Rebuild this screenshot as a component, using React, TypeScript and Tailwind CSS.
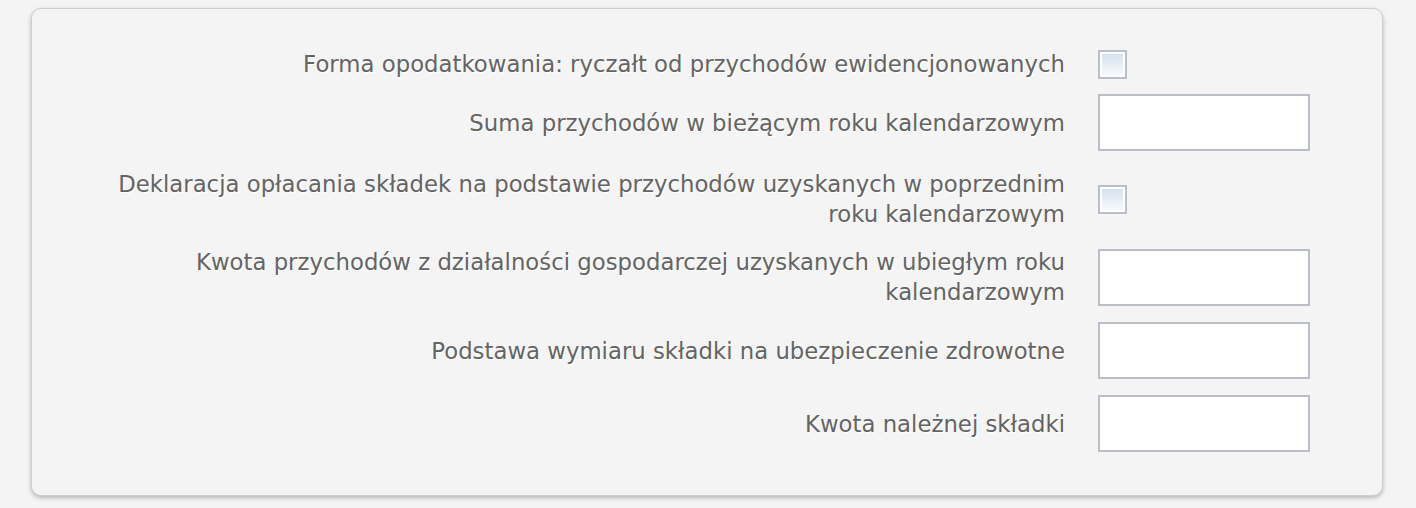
import React from "react";

const Checkbox = () => (
  <div className="w-[29px] h-[29px] border-2 border-[#b9bec8] bg-white p-[2px]">
    <div className="w-full h-full bg-gradient-to-b from-[#d5e2ed] to-[#f7fafd]" />
  </div>
);

const Input = () => (
  <input type="text" className="w-[212px] h-[57px] border-2 border-[#b9bec8] bg-white outline-none" />
);

type Row = { label: string; kind: "cb" | "in"; mt: string };

const rows: Row[] = [
  { label: "Forma opodatkowania: ryczałt od przychodów ewidencjonowanych", kind: "cb", mt: "mt-0" },
  { label: "Suma przychodów w bieżącym roku kalendarzowym", kind: "in", mt: "mt-[15px]" },
  {
    label: "Deklaracja opłacania składek na podstawie przychodów uzyskanych w poprzednim roku kalendarzowym",
    kind: "cb",
    mt: "mt-[18px]",
  },
  {
    label: "Kwota przychodów z działalności gospodarczej uzyskanych w ubiegłym roku kalendarzowym",
    kind: "in",
    mt: "mt-[18px]",
  },
  { label: "Podstawa wymiaru składki na ubezpieczenie zdrowotne", kind: "in", mt: "mt-[15px]" },
  { label: "Kwota należnej składki", kind: "in", mt: "mt-[16px]" },
];

export default function App() {
  return (
    <div className="w-[1416px] h-[508px] bg-[#f4f4f4] pt-[8px] pl-[31px]" style={{ fontFamily: '"DejaVu Sans", Verdana, sans-serif' }}>
      <div className="w-[1352px] h-[488px] bg-[#f4f4f4] border border-[#cfcfcf] rounded-[10px] shadow-[0_2px_4px_rgba(0,0,0,0.25)] pt-[40px] pl-[63px]">
        {rows.map((r, i) => (
          <div key={i} className={`flex items-center ${r.mt}`}>
            <div className="w-[970px] text-right text-[22.8px] leading-[30px] text-[#646464] [text-shadow:1px_1px_0_#ffffff]">
              {r.label}
            </div>
            <div className="ml-[33px]">{r.kind === "cb" ? <Checkbox /> : <Input />}</div>
          </div>
        ))}
      </div>
    </div>
  );
}
